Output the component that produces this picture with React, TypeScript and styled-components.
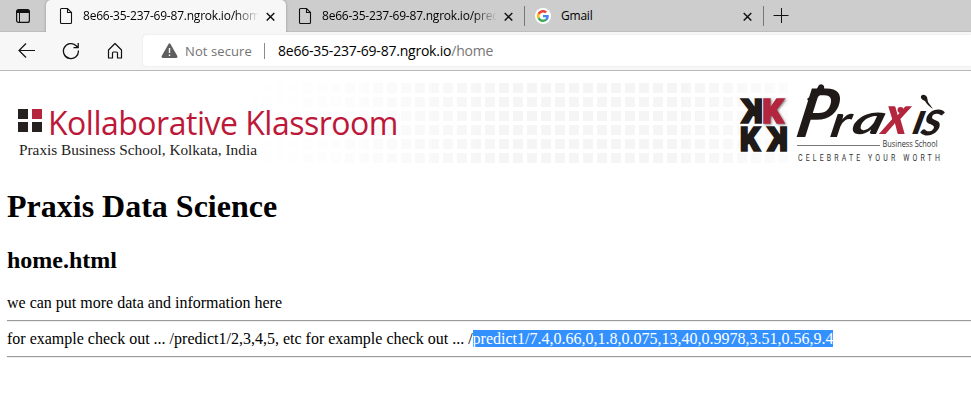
import React from "react";
import styled, { createGlobalStyle } from "styled-components";

const GlobalStyle = createGlobalStyle`
  * { box-sizing: border-box; }
  body { margin: 0; background: #fff; overflow: hidden; }
`;

const Browser = styled.div`
  width: 971px;
  height: 408px;
  overflow: hidden;
  background: #fff;
  color: #000;
`;

const TabStrip = styled.div`
  display: flex;
  height: 32px;
  background: #cdcdcd;
  box-shadow: inset 0 -1px 0 #bdbdbd;
  font-family: "Open Sans", sans-serif;
  font-size: 12px;
`;

const TabMenu = styled.div`
  width: 46px;
  padding: 9px 0 0 16px;
  line-height: 0;
`;

const Tab = styled.div<{ $active?: boolean; $width: number; $inset?: number }>`
  display: flex;
  align-items: center;
  width: ${(p) => p.$width}px;
  height: 32px;
  padding: 0 11px 0 ${(p) => p.$inset ?? 12}px;
  border-radius: 5px 5px 0 0;
  background: ${(p) => (p.$active ? "#f7f7f7" : "transparent")};
  box-shadow: ${(p) => (p.$active ? "0 0 3px rgba(0,0,0,.3)" : "none")};
`;

const TabTitle = styled.span<{ $fade?: boolean }>`
  flex: 1;
  margin: 0 7px 0 10px;
  overflow: hidden;
  white-space: nowrap;
  line-height: 20px;
  letter-spacing: -0.22px;
  mask-image: ${(p) =>
    p.$fade ? "linear-gradient(to right, #000 86%, transparent 100%)" : "none"};
`;

const Separator = styled.div`
  width: 1px;
  height: 20px;
  margin-top: 6px;
  background: #777;
`;

const NewTab = styled.div`
  padding: 8px 0 0 9px;
  line-height: 0;
`;

const Toolbar = styled.div`
  position: relative;
  display: flex;
  align-items: center;
  height: 39px;
  padding: 0 0 1px 18px;
  background: #f7f7f7;
  border-bottom: 1px solid #b9b9b9;
`;

const NavButton = styled.div`
  width: 44px;
  height: 18px;
  line-height: 0;
`;

const AddressBar = styled.div`
  display: flex;
  align-items: center;
  flex: 1;
  height: 31px;
  margin-left: -7px;
  padding-left: 18px;
  background: #fff;
  border-radius: 4px 0 0 4px;
  box-shadow: 0 0 2px rgba(0, 0, 0, 0.1);
  font: 14px/20px "Open Sans", sans-serif;
`;

const Security = styled.span`
  width: 79px;
  margin-left: 7px;
  color: #737373;
  font-size: 13px;
  white-space: nowrap;
  letter-spacing: 0.1px;
`;

const AddressDivider = styled.span`
  width: 1px;
  height: 16px;
  background: #8b8b8b;
`;

const Url = styled.span`
  margin-left: 13px;
  white-space: nowrap;
  letter-spacing: -0.22px;
`;

const UrlPath = styled.span`
  color: #767676;
`;

const Page = styled.main`
  padding: 12px 0 0 7px;
  font-family: "Liberation Serif", serif;
  font-size: 16px;
`;

const Banner = styled.header`
  display: flex;
  justify-content: space-between;
  height: 82px;
  position: relative;
`;

const Pattern = styled.div`
  position: absolute;
  left: 225px;
  top: 0;
  width: 556px;
  height: 80px;
  background:
    repeating-linear-gradient(to bottom, transparent 0 10px, #fff 10px 14px),
    repeating-linear-gradient(to right, #fff 0 1px, transparent 1px 11px, #fff 11px 14px),
    #f5f5f5;
  mask-image: linear-gradient(
    to right,
    transparent,
    rgba(0, 0, 0, 0.25) 20%,
    #000 50%,
    #000 80%,
    rgba(0, 0, 0, 0.35)
  );
`;

const Brand = styled.div`
  position: relative;
  padding: 20px 0 0 11px;
`;

const BrandRow = styled.div`
  display: flex;
  align-items: center;
  height: 40px;
`;

const BrandGrid = styled.div`
  display: grid;
  grid-template-columns: 10px 10px;
  grid-template-rows: 10px 10px;
  gap: 3px 4px;
  margin-top: -5px;
`;

const Block = styled.i<{ $red?: boolean }>`
  background: ${(p) => (p.$red ? "#b3263d" : "#26211f")};
`;

const BrandName = styled.span`
  margin-left: 6px;
  font: 32px/40px "Open Sans", sans-serif;
  letter-spacing: -0.5px;
  color: #bd1839;
  white-space: nowrap;
`;

const Tagline = styled.div`
  margin: -2px 0 0 1px;
  color: #222;
  line-height: 18px;
  font-size: 15.3px;
`;

const LogoBox = styled.div`
  position: relative;
  width: 236px;
  line-height: 0;
`;

const Title = styled.h1`
  margin: 22px 0 0;
  font-size: 32px;
  line-height: 38px;
`;

const Subtitle = styled.h2`
  margin: 21px 0 0;
  font-size: 24px;
  line-height: 28px;
`;

const Line = styled.p`
  margin: 0;
  line-height: 18px;
  white-space: nowrap;
`;

const Intro = styled(Line)`
  margin-top: 20px;
`;

const Rule = styled.hr`
  margin: 8px 0;
  height: 2px;
  border: 0;
  border-top: 1px solid #9a9a9a;
  border-bottom: 1px solid #eee;
`;

const Selected = styled.span`
  background: #3390ff;
  color: #fff;
`;

const PageIcon = () => (
  <svg width="14" height="18" viewBox="0 0 14 18" fill="none" stroke="#111" strokeWidth="1.1">
    <path d="M2.5 1.5h6l4 4v10a1 1 0 0 1-1 1h-9a1 1 0 0 1-1-1v-13a1 1 0 0 1 1-1zM8.5 1.5v4h4" />
  </svg>
);

const CloseIcon = () => (
  <svg width="9" height="9" viewBox="0 0 9 9" stroke="#111" strokeWidth="1.4">
    <path d="M.7 1l7.600 7.600M8.300 1L.7 8.600" />
  </svg>
);

const GoogleIcon = () => (
  <svg width="16" height="16" viewBox="0 0 16 16">
    <circle cx="8" cy="8" r="8" fill="#fff" />
    <g transform="translate(2 2) scale(.25)">
      <path fill="#EA4335" d="M24 9.5c3.54 0 6.71 1.22 9.21 3.6l6.85-6.85C35.9 2.38 30.47 0 24 0 14.62 0 6.51 5.38 2.56 13.22l7.98 6.19C12.43 13.72 17.74 9.5 24 9.5z" />
      <path fill="#4285F4" d="M46.98 24.55c0-1.57-.15-3.09-.38-4.55H24v9.02h12.94c-.58 2.96-2.26 5.48-4.78 7.18l7.73 6c4.51-4.18 7.09-10.36 7.09-17.65z" />
      <path fill="#FBBC05" d="M10.53 28.59c-.48-1.45-.76-2.99-.76-4.59s.27-3.14.76-4.59l-7.98-6.19C.92 16.46 0 20.12 0 24s.92 7.54 2.56 10.78l7.97-6.19z" />
      <path fill="#34A853" d="M24 48c6.48 0 11.93-2.13 15.89-5.81l-7.73-6c-2.15 1.45-4.92 2.3-8.16 2.3-6.26 0-11.57-4.22-13.47-9.91l-7.98 6.19C6.51 42.62 14.62 48 24 48z" />
    </g>
  </svg>
);

const LogoSvg = styled.svg`
  display: block;
  overflow: visible;
`;

const RedMark = styled.text`
  fill: #b3263d;
  stroke: #b3263d;
  filter: drop-shadow(1.5px 1px 1px rgba(0, 0, 0, 0.5));
`;

const PraxisLogo = () => (
  <LogoSvg width="236" height="82" viewBox="735 82 236 82">
    <g fontFamily="Roboto, sans-serif" fontWeight="900" fontSize="33" fill="#1f1a18" stroke="#1f1a18" strokeWidth="1.6">
      <text transform="translate(763 122) scale(-1.020 1)">K</text>
      <RedMark transform="translate(762.300 122) scale(1.010 1)">K</RedMark>
      <text transform="translate(739.800 150) scale(.97 1)">K</text>
      <text transform="translate(788 150) scale(-.97 1)">K</text>
    </g>
    <g fontFamily="Lato, sans-serif" fontStyle="italic" fontWeight="700" fill="#1f1a18">
      <text transform="translate(794 136) skewX(-11) scale(1 1)" fontSize="67">P</text>
      <text transform="translate(829 135.500) skewX(-10) scale(1.250 1)" fontSize="45">r</text>
      <text transform="translate(850 132.500) skewX(-16) scale(1.350 .92)" fontSize="45">a</text>
      <text transform="translate(881 133) skewX(-10) scale(1.120 1.150)" fontSize="47" fill="#b3263d">x</text>
      <text transform="translate(911 132.500) skewX(-14)" fontSize="45">ı</text>
      <text transform="translate(920 134) skewX(-14)" fontSize="49">s</text>
    </g>
    <path d="M807 98q8-6 12-14 3-2 5 1 1 3-1 5-5 8-14 11z" fill="#1f1a18" />
    <circle cx="900.500" cy="109" r="3" fill="#b3263d" />
    <path d="M921 95q3-3 6 1l1 5 5 7q-6-4-8-8-5-2-4-5z" fill="#1f1a18" />
    <path d="M797 144.500h83" stroke="#777" strokeWidth="1.200" />
    <g fontFamily="Open Sans, sans-serif" fill="#333">
      <text x="882.500" y="145.500" fontSize="8.500" textLength="55" lengthAdjust="spacingAndGlyphs">Business School</text>
      <text transform="translate(798 159.800) scale(.82 1)" fontSize="8.500" fontFamily="Roboto, sans-serif" textLength="173">CELEBRATE YOUR WORTH</text>
    </g>
  </LogoSvg>
);

export default function App() {
  return (
    <Browser>
      <GlobalStyle />
      <TabStrip>
        <TabMenu>
          <svg width="14" height="14" viewBox="0 0 14 14">
            <rect x=".6" y=".6" width="12.800" height="12.800" rx="2" fill="none" stroke="#111" strokeWidth="1.200" />
            <path d="M1 1h12v3H1z" fill="#111" />
            <path d="M3.500 4v9" stroke="#111" />
          </svg>
        </TabMenu>
        <Tab $active $width={240} $inset={13}>
          <PageIcon />
          <TabTitle $fade>8e66-35-237-69-87.ngrok.io/home</TabTitle>
          <CloseIcon />
        </Tab>
        <Tab $width={238}>
          <PageIcon />
          <TabTitle $fade>8e66-35-237-69-87.ngrok.io/predict</TabTitle>
          <CloseIcon />
        </Tab>
        <Separator />
        <Tab $width={238} $inset={10}>
          <GoogleIcon />
          <TabTitle>Gmail</TabTitle>
          <CloseIcon />
        </Tab>
        <Separator />
        <NewTab>
          <svg width="16" height="16" stroke="#111">
            <path d="M.5 7.500h15M8.500 0v15" />
          </svg>
        </NewTab>
      </TabStrip>
      <Toolbar>
        <NavButton>
          <svg width="18" height="18" fill="none" stroke="#111" strokeWidth="1.200">
            <path d="M17 8.500H1.500M8 1.500l-7 7 7 7" />
          </svg>
        </NavButton>
        <NavButton>
          <svg width="18" height="18" fill="none" stroke="#111" strokeWidth="1.300">
            <path d="M16.400 8.500a7.500 7.500 0 1 1-2.300-4.800l2 2M16.200 1v4.700h-4.700" />
          </svg>
        </NavButton>
        <NavButton>
          <svg width="18" height="18" fill="none" stroke="#111" strokeWidth="1.200" strokeLinejoin="round">
            <path d="M2.500 8l6.500-6.500L15.500 8v8h-4v-5a1 1 0 0 0-1-1h-3a1 1 0 0 0-1 1v5h-4z" />
          </svg>
        </NavButton>
        <AddressBar>
          <svg width="17" height="16" viewBox="0 0 17 16">
            <path d="M7.500 1q1-1.300 2 0l6.800 12q.6 1.500-1 2H1.700q-1.600-.5-1-2z" fill="#5f5f5f" />
            <path d="M8.500 5v5M8.500 11.500v1.500" stroke="#fff" strokeWidth="1.400" />
          </svg>
          <Security>Not secure</Security>
          <AddressDivider />
          <Url>8e66-35-237-69-87.ngrok.io<UrlPath>/home</UrlPath></Url>
        </AddressBar>
      </Toolbar>
      <Page>
        <Banner>
          <Pattern />
          <Brand>
            <BrandRow>
              <BrandGrid>
                <Block /><Block $red /><Block /><Block />
              </BrandGrid>
              <BrandName>Kollaborative Klassroom</BrandName>
            </BrandRow>
            <Tagline>Praxis Business School, Kolkata, India</Tagline>
          </Brand>
          <LogoBox><PraxisLogo /></LogoBox>
        </Banner>
        <Title>Praxis Data Science</Title>
        <Subtitle>home.html</Subtitle>
        <Intro>we can put more data and information here</Intro>
        <Rule />
        <Line>
          for example check out ... /predict1/2,3,4,5, etc for example check out ... /
          <Selected>predict1/7.4,0.66,0,1.8,0.075,13,40,0.9978,3.51,0.56,9.4</Selected>
        </Line>
        <Rule />
      </Page>
    </Browser>
  );
}
